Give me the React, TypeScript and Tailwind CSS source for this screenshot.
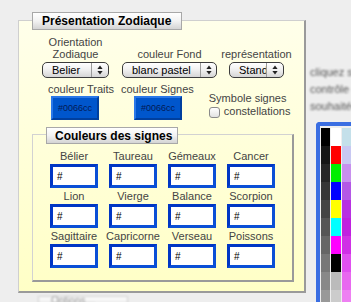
const signs = [
  "Bélier",
  "Taureau",
  "Gémeaux",
  "Cancer",
  "Lion",
  "Vierge",
  "Balance",
  "Scorpion",
  "Sagittaire",
  "Capricorne",
  "Verseau",
  "Poissons",
];

const palette = [
  ["#000000", "#ffffff", "#c4e0ea"],
  ["#161616", "#ff0000", "#c8c8f2"],
  ["#262626", "#00ee00", "#c890ee"],
  ["#363636", "#0000ff", "#b458e6"],
  ["#444444", "#ffff00", "#b830e2"],
  ["#555555", "#00ffff", "#c020e0"],
  ["#666666", "#ff00ff", "#d030e6"],
  ["#777777", "#000000", "#e050f0"],
  ["#888888", "#bbbbbb", "#e868f0"],
  ["#999999", "#cccccc", "#ee80f2"],
];

function Arrows() {
  return (
    <svg width="6" height="10" viewBox="0 0 6 10">
      <path d="M3 0.5 L5.6 4 H0.4 Z" fill="#222" />
      <path d="M3 9.5 L5.6 6 H0.4 Z" fill="#222" />
    </svg>
  );
}

function Select({
  value,
  className,
  arrowClass,
}: {
  value: string;
  className: string;
  arrowClass: string;
}) {
  return (
    <div
      className={
        "flex h-[16px] items-stretch overflow-hidden rounded-[5px] border border-[#3c3c3c] bg-gradient-to-b from-[#ffffff] via-[#efefef] to-[#d6d6d6] " +
        className
      }
    >
      <div className="flex-1 overflow-hidden whitespace-nowrap pl-[9px] text-[11px] leading-[14px] text-black">
        {value}
      </div>
      <div
        className={
          "flex items-center justify-center border-l border-[#9a9a9a] " +
          arrowClass
        }
      >
        <Arrows />
      </div>
    </div>
  );
}

function ColorButton() {
  return (
    <div className="flex h-[24px] w-[48px] items-center justify-center border-2 border-t-[#2a78e8] border-l-[#2a78e8] border-b-[#003f9e] border-r-[#003f9e] bg-[#0056cc] text-[9px] text-[#021a55]">
      #0066cc
    </div>
  );
}

function Tab({ label, className }: { label: string; className: string }) {
  return (
    <div
      className={
        "flex items-center border border-[#a8a8a8] bg-gradient-to-b from-[#ffffff] via-[#f2f2f2] to-[#d4d4d4] text-[12px] font-bold text-black " +
        className
      }
    >
      {label}
    </div>
  );
}

export default function App() {
  return (
    <div
      className="flex h-[302px] w-[351px] overflow-hidden bg-[#eeeeee] text-[#444]"
      style={{ fontFamily: '"Liberation Sans", Arial, sans-serif' }}
    >
      <div className="w-[310px] shrink-0 pl-[18px] pt-[20px]">
        <div className="h-[273px] w-[288px] border-l border-t border-l-[#cfcfcf] border-t-[#cfcfcf] border-r-2 border-b-2 border-r-[#9a9a9a] border-b-[#9a9a9a] bg-gradient-to-b from-[#ffffea] to-[#ffffc6]">
          <Tab
            label="Présentation Zodiaque"
            className="-mt-[9px] ml-[13px] h-[18px] w-[150px] pl-[9px]"
          />

          <div className="ml-[23px] mt-[6px] flex items-end text-[11px] leading-[12px]">
            <div className="flex w-[67px] flex-col items-center">
              <div className="text-center">
                Orientation
                <br />
                Zodiaque
              </div>
              <Select
                value="Belier"
                className="mt-[2px] w-[67px]"
                arrowClass="w-[17px]"
              />
            </div>
            <div className="ml-[13px] flex w-[95px] flex-col items-center">
              <div className="whitespace-nowrap">couleur Fond</div>
              <Select
                value="blanc pastel"
                className="mt-[2px] w-[95px]"
                arrowClass="w-[16px]"
              />
            </div>
            <div className="ml-[12px] flex w-[55px] flex-col items-center">
              <div className="whitespace-nowrap">représentation</div>
              <Select
                value="Standard"
                className="mt-[2px] w-[55px]"
                arrowClass="w-[17px]"
              />
            </div>
          </div>

          <div className="ml-[29px] mt-[5px] flex items-start text-[11px] leading-[12px]">
            <div className="w-[64px]">
              <div className="whitespace-nowrap">couleur Traits</div>
              <div className="ml-[3px] mt-[1px]">
                <ColorButton />
              </div>
            </div>
            <div className="ml-[9px]">
              <div className="whitespace-nowrap">couleur Signes</div>
              <div className="ml-[13px] mt-[1px]">
                <ColorButton />
              </div>
            </div>
            <div className="ml-[15px] pt-[9px]">
              <div className="whitespace-nowrap">Symbole signes</div>
              <div className="flex items-center gap-[4px]">
                <div className="mt-[3px] h-[11px] w-[11px] rounded-[3px] border border-[#8a8a8a] bg-gradient-to-b from-white to-[#e2e2e2]" />
                <div>constellations</div>
              </div>
            </div>
          </div>

          <div className="ml-[13px] mt-[14px] h-[148px] w-[262px] border-l border-t border-l-[#d2d2d2] border-t-[#d2d2d2] border-r-2 border-b-2 border-r-[#9a9a9a] border-b-[#9a9a9a]">
            <Tab
              label="Couleurs des signes"
              className="-mt-[8px] ml-[13px] h-[17px] w-[132px] pl-[8px]"
            />
            <div className="mt-[6px] grid grid-cols-[48px_48px_48px_48px] gap-x-[11px] gap-y-[2px] pl-[17px]">
              {signs.map((s) => (
                <div key={s} className="flex flex-col items-center">
                  <div className="h-[12px] whitespace-nowrap text-[11px] leading-[12px]">
                    {s}
                  </div>
                  <div className="mt-[2px] flex h-[24px] w-[48px] items-center border-[3px] border-t-[#0036c4] border-l-[#0036c4] border-b-[#0a4fd6] border-r-[#0a4fd6] bg-white pl-[4px] text-[10px] text-black">
                    #
                  </div>
                </div>
              ))}
            </div>
          </div>
        </div>

        <div className="ml-[20px] mt-[3px] h-[10px] w-[90px] border border-[#d0d0d0] bg-gradient-to-b from-white to-[#e6e6e6] pl-[12px] text-[10px] leading-[8px] text-[#999] blur-[1px]">
          Options…
        </div>
      </div>

      <div className="flex-1">
        <div className="mt-[64px] whitespace-nowrap text-[11px] leading-[17px] text-[#555] blur-[1.3px]">
          <div>cliquez sur</div>
          <div>contrôle et</div>
          <div>souhaitée</div>
        </div>
        <div className="ml-[6px] mt-[7px] rounded-tl-[4px] border-l-[4px] border-t-[4px] border-[#3a6ee2] pl-[1px] pt-[2px] blur-[0.6px]">
          {palette.map((row, i) => (
            <div key={i} className="flex h-[18px]">
              <div
                className="w-[9px]"
                style={{ backgroundColor: row[0] }}
              />
              <div
                className="ml-[1px] w-[10px]"
                style={{ backgroundColor: row[1] }}
              />
              <div
                className="ml-[1px] w-[12px]"
                style={{ backgroundColor: row[2] }}
              />
            </div>
          ))}
        </div>
      </div>
    </div>
  );
}
